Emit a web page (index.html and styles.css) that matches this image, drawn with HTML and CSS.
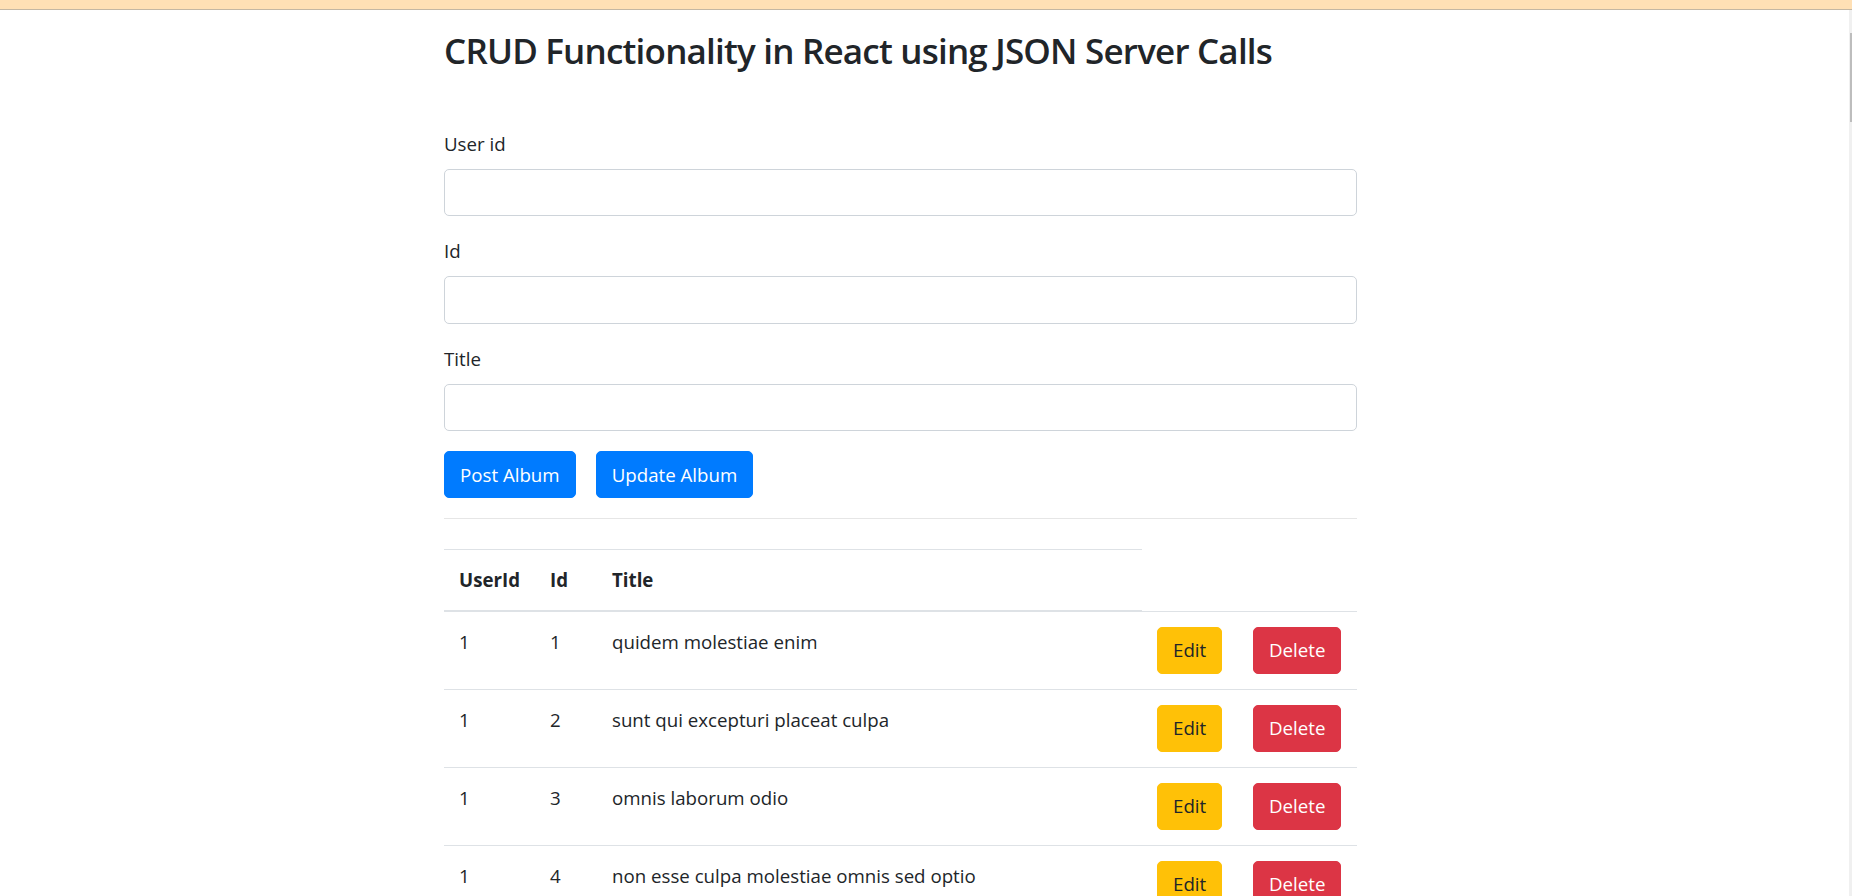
FILE: index.html
```html
<!DOCTYPE html>
<html lang="en">
<head>
<meta charset="utf-8">
<title>CRUD Functionality in React using JSON Server Calls</title>
<link rel="stylesheet" href="styles.css">
</head>
<body>
<div class="topbar"></div>
<div class="scrolltrack"><div class="scrollthumb"></div></div>
<main class="page">
  <h2 class="title">CRUD Functionality in React using JSON Server Calls</h2>
  <form class="form">
    <div class="group">
      <label class="label" for="userId">User id</label>
      <input class="input" id="userId" type="text">
    </div>
    <div class="group">
      <label class="label" for="id">Id</label>
      <input class="input" id="id" type="text">
    </div>
    <div class="group">
      <label class="label" for="title">Title</label>
      <input class="input" id="title" type="text">
    </div>
    <div class="actions">
      <button type="button" class="btn btn-primary">Post Album</button>
      <button type="button" class="btn btn-primary">Update Album</button>
    </div>
  </form>
  <hr class="rule">
  <table class="table">
    <colgroup>
      <col class="c-user"><col class="c-id"><col class="c-title"><col class="c-edit"><col class="c-del">
    </colgroup>
    <thead>
      <tr><th>UserId</th><th>Id</th><th>Title</th></tr>
    </thead>
    <tbody>
      <tr><td>1</td><td>1</td><td>quidem molestiae enim</td><td><button type="button" class="btn btn-warning">Edit</button></td><td><button type="button" class="btn btn-danger">Delete</button></td></tr>
      <tr><td>1</td><td>2</td><td>sunt qui excepturi placeat culpa</td><td><button type="button" class="btn btn-warning">Edit</button></td><td><button type="button" class="btn btn-danger">Delete</button></td></tr>
      <tr><td>1</td><td>3</td><td>omnis laborum odio</td><td><button type="button" class="btn btn-warning">Edit</button></td><td><button type="button" class="btn btn-danger">Delete</button></td></tr>
      <tr><td>1</td><td>4</td><td>non esse culpa molestiae omnis sed optio</td><td><button type="button" class="btn btn-warning">Edit</button></td><td><button type="button" class="btn btn-danger">Delete</button></td></tr>
    </tbody>
  </table>
</main>
</body>
</html>
```
FILE: styles.css
```css
html, body {
  margin: 0;
  padding: 0;
  overflow: hidden;
  background: #fff;
}
body {
  font-family: "Open Sans", "Noto Sans", "Liberation Sans", sans-serif;
  font-size: 18.7px;
  line-height: 30px;
  color: #212529;
}
.topbar {
  height: 9px;
  background: #ffe0b5;
  border-bottom: 1px solid #c4b7a3;
}
.scrolltrack {
  position: fixed;
  top: 10px;
  right: 0;
  bottom: 0;
  width: 3px;
  background: #f0f0f0;
}
.scrollthumb {
  margin-top: 23px;
  margin-left: 1px;
  width: 2px;
  height: 89px;
  background: #bdbdbd;
}
.page {
  width: 913px;
  margin-left: 444px;
}
.title {
  font-size: 35px;
  font-weight: 600;
  letter-spacing: -0.8px;
  line-height: 48px;
  margin: 17px 0 53.7px;
}
.group {
  margin-bottom: 20px;
}
.label {
  display: block;
  margin-bottom: 10px;
}
.input {
  display: block;
  box-sizing: border-box;
  width: 100%;
  height: 47.5px;
  padding: 7.5px 15px;
  font: inherit;
  color: #495057;
  background: #fff;
  border: 1px solid #ced4da;
  border-radius: 5px;
  margin: 0;
}
.actions {
  display: flex;
  gap: 20px;
}
.btn {
  font: inherit;
  line-height: 30px;
  padding: 7.5px 15px;
  border: 1px solid transparent;
  border-radius: 5px;
  margin: 0;
  cursor: pointer;
}
.btn-primary {
  background: #007bff;
  border-color: #007bff;
  color: #fff;
}
.btn-warning {
  background: #ffc107;
  border-color: #ffc107;
  color: #212529;
}
.btn-danger {
  background: #dc3545;
  border-color: #dc3545;
  color: #fff;
}
.rule {
  margin: 20px 0 30px;
  border: 0;
  border-top: 1px solid #e6e6e6;
  height: 0;
}
.table {
  width: 100%;
  table-layout: fixed;
  border-collapse: collapse;
}
.c-user { width: 91px; }
.c-id { width: 62px; }
.c-title { width: 545px; }
.c-edit { width: 96px; }
.c-del { width: 119px; }
.table th,
.table td {
  padding: 15px;
  text-align: left;
  vertical-align: top;
  border-top: 1px solid #dee2e6;
}
.table th {
  font-weight: 700;
  border-bottom: 2px solid #dee2e6;
}
.table td .btn {
  display: block;
}
```
